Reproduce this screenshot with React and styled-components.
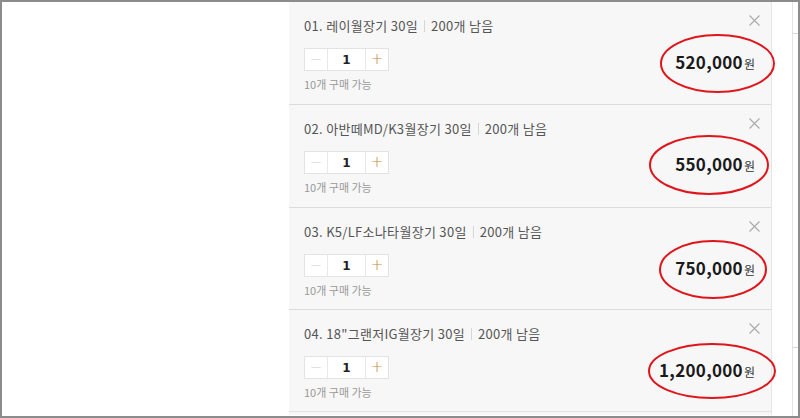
import React from "react";
import styled, { createGlobalStyle } from "styled-components";

const Global = createGlobalStyle`
  html, body { margin: 0; padding: 0; background: #fff; }
  body { font-family: "Noto Sans CJK KR", "Noto Sans", sans-serif; }
  * { box-sizing: border-box; }
`;

const Frame = styled.div`
  width: 800px;
  height: 418px;
  border: 2px solid #8c8c8c;
  display: flex;
  overflow: hidden;
  background: #fff;
`;

const Spacer = styled.div`
  width: 287px;
  flex: none;
`;

const Panel = styled.div`
  width: 483px;
  flex: none;
  background: #f7f7f7;
  border-right: 1px solid #e6e6e6;
  padding-bottom: 3px;
  align-self: flex-start;
`;

const RightStrip = styled.div`
  width: 21px;
  flex: none;
  border-right: 1px solid #e4e4e4;
  display: flex;
  flex-direction: column;
`;

const Tick = styled.div`
  height: 1px;
  background: #d8d8d8;
  margin-top: ${(p) => p.$top}px;
  margin-left: 20px;
  width: 6px;
`;

const Item = styled.div`
  display: flex;
  height: ${(p) => p.$h}px;
  padding: 14px 11px 0 15px;
  border-bottom: 1px solid #dcdcdc;
  &:last-child { border-bottom: 1px solid #e2e2e2; }
`;

const Left = styled.div`
  flex: 1;
  display: flex;
  flex-direction: column;
`;

const Title = styled.div`
  font-size: 13px;
  line-height: 20px;
  color: #555;
  display: flex;
  align-items: center;
  white-space: nowrap;
  letter-spacing: 0.3px;
`;

const Sep = styled.span`
  display: inline-block;
  width: 1px;
  height: 12px;
  background: #d6d6d6;
  margin: 0 6px;
`;

const Qty = styled.div`
  margin-top: 12px;
  display: flex;
  width: 85px;
  height: 23px;
  border: 1px solid #e3e3e3;
  background: #fff;
`;

const QBtn = styled.div`
  width: 22px;
  display: flex;
  align-items: center;
  justify-content: center;
  color: ${(p) => (p.$plus ? "#c58a3e" : "#cfcfcf")};
  font-size: 15px;
  font-family: "DejaVu Sans", sans-serif;
  line-height: 1;
  font-weight: 300;
`;

const QNum = styled.div`
  flex: 1;
  border-left: 1px solid #e8e8e8;
  border-right: 1px solid #e8e8e8;
  display: flex;
  align-items: center;
  justify-content: center;
  font-size: 12px;
  font-weight: 700;
  color: #222;
  font-family: "DejaVu Sans", sans-serif;
`;

const Avail = styled.div`
  margin-top: 5px;
  font-size: 11px;
  line-height: 16px;
  color: #999;
`;

const Right = styled.div`
  display: flex;
  flex-direction: column;
  align-items: flex-end;
`;

const Close = styled.div`
  width: 11px;
  height: 11px;
  margin-top: -1px;
  display: flex;
`;

const PriceWrap = styled.div`
  position: relative;
  margin-top: ${(p) => p.$mt}px;
  margin-right: 5px;
  display: flex;
  align-items: baseline;
  white-space: nowrap;
`;

const Num = styled.span`
  font-size: 17px;
  font-weight: 700;
  color: #1a1a1a;
  line-height: 24px;
  letter-spacing: 0.3px;
`;

const Won = styled.span`
  font-size: 12px;
  color: #333;
  margin-left: 1px;
`;

const Ring = styled.svg`
  position: absolute;
  left: 50%;
  top: 50%;
  pointer-events: none;
  overflow: visible;
`;

const items = [
  { title: "01. 레이월장기 30일", price: "520,000", h: 103, mt: 24, ew: 115, eh: 59, dx: 2, dy: 1 },
  { title: "02. 아반떼MD/K3월장기 30일", price: "550,000", h: 103, mt: 23, ew: 120, eh: 60, dx: -6, dy: 1 },
  { title: "03. K5/LF소나타월장기 30일", price: "750,000", h: 102, mt: 24, ew: 108, eh: 59, dx: -2, dy: 1 },
  { title: "04. 18\"그랜저IG월장기 30일", price: "1,200,000", h: 102, mt: 24, ew: 128, eh: 56, dx: 5, dy: 1 },
];

const XIcon = () => (
  <svg width="11" height="11" viewBox="0 0 11 11">
    <path d="M0.5 0.5 L10.5 10.5 M10.5 0.5 L0.5 10.5" stroke="#a9a9a9" strokeWidth="1.1" fill="none" />
  </svg>
);

export default function App() {
  return (
    <>
      <Global />
      <Frame>
        <Spacer />
        <Panel>
          {items.map((it, i) => (
            <Item key={i} $h={it.h}>
              <Left>
                <Title>
                  {it.title}
                  <Sep />
                  200개 남음
                </Title>
                <Qty>
                  <QBtn>−</QBtn>
                  <QNum>1</QNum>
                  <QBtn $plus>+</QBtn>
                </Qty>
                <Avail>10개 구매 가능</Avail>
              </Left>
              <Right>
                <Close>
                  <XIcon />
                </Close>
                <PriceWrap $mt={it.mt}>
                  <Num>{it.price}</Num>
                  <Won>원</Won>
                  <Ring
                    width={it.ew}
                    height={it.eh}
                    style={{ marginLeft: -it.ew / 2 + it.dx, marginTop: -it.eh / 2 + it.dy }}
                    viewBox={`0 0 ${it.ew} ${it.eh}`}
                  >
                    <ellipse
                      cx={it.ew / 2}
                      cy={it.eh / 2}
                      rx={it.ew / 2 - 1}
                      ry={it.eh / 2 - 1}
                      fill="none"
                      stroke="#e0151b"
                      strokeWidth="2"
                    />
                  </Ring>
                </PriceWrap>
              </Right>
            </Item>
          ))}
        </Panel>
        <RightStrip>
          <Tick $top={31} />
          <Tick $top={313} />
        </RightStrip>
      </Frame>
    </>
  );
}
